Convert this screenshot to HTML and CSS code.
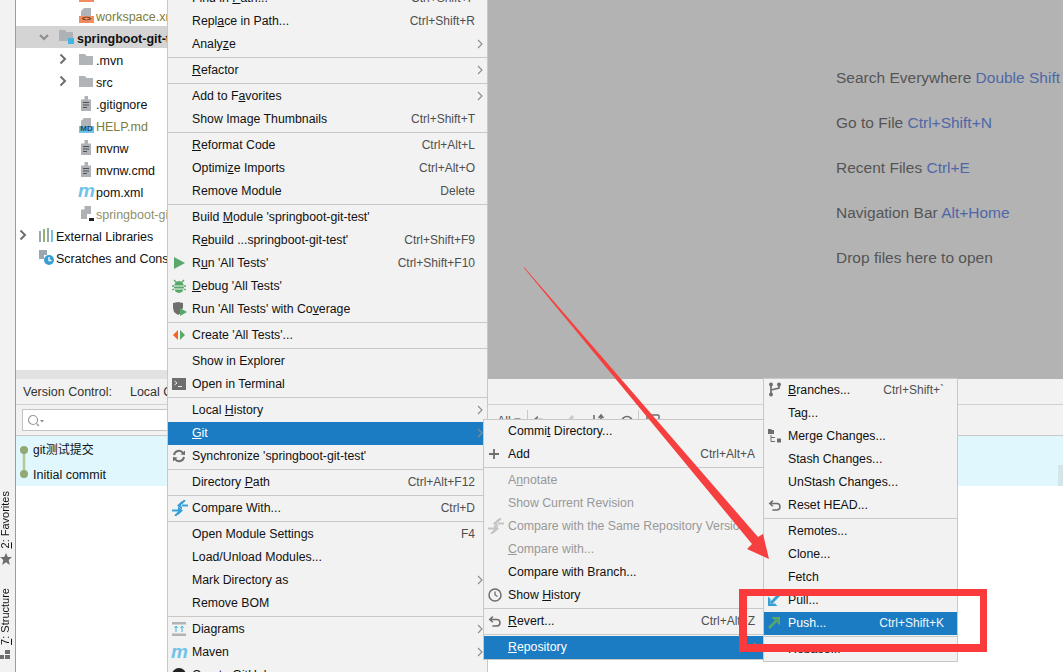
FILE: index.html
```html
<!DOCTYPE html>
<html lang="en">
<head>
<meta charset="utf-8">
<title>IDE Git menu</title>
<link rel="stylesheet" href="styles.css">
</head>
<body>
<svg class="defs" width="0" height="0">
  <symbol id="chev" viewBox="0 0 6 10"><path d="M1 1l4 4-4 4" fill="none" stroke="#8c8c8c" stroke-width="1.1"/></symbol>
  <symbol id="tchev" viewBox="0 0 8 12"><path d="M1.500 1.500L6 6l-4.500 4.500" fill="none" stroke="#6e6e6e" stroke-width="2"/></symbol>
  <symbol id="folder" viewBox="0 0 14 11"><path d="M0 0h6l1.500 2H14v9H0z" fill="#b0b4b8"/></symbol>
  <symbol id="file" viewBox="0 0 10 15"><path d="M3.500 0H7v3.500H10V15H0V3.500h3.500z" fill="#aeb2b6"/><path d="M2 6.500h6M2 9h6M2 11.500h4" stroke="#4e5154" stroke-width="1"/></symbol>
  <symbol id="compare" viewBox="0 0 16 16"><path d="M10 1L5 5.500 10 10z M9 4.500h7v2H9z M6 6l5 4.500L6 15z M0 9.500h7v2H0z" fill="#389fd6"/><path d="M9.500 3.500L13 0M6.500 12.500L3 16" stroke="#389fd6" stroke-width="2"/></symbol>
  <symbol id="undo" viewBox="0 0 16 16"><path d="M5.500 3L2 6.200l3.500 3.200M2.500 6.200h7.500a3.700 3.700 0 0 1 0 7.400H5" fill="none" stroke="#6e6e6e" stroke-width="1.700"/></symbol>
</svg>

<div class="app">
  <aside class="stripe">
    <div class="stripe-tool"><span class="vtext"><u>2</u>: Favorites</span>
      <svg class="stripe-icon" width="12" height="12" viewBox="0 0 12 12"><path d="M6 0l1.800 4H12L8.700 7l1.100 5L6 9.300 2.200 12l1.100-5L0 4h4.200z" fill="#6e6e6e"/></svg>
    </div>
    <div class="stripe-tool"><span class="vtext"><u>7</u>: Structure</span>
      <svg class="stripe-icon" width="10" height="10" viewBox="0 0 10 10"><path d="M5 0h5v4H5zM0 5h4v4H0zM5 5h5v4H5z" fill="#6e6e6e"/></svg>
    </div>
  </aside>

  <main class="main">
    <div class="top">
      <section class="tree">
        <div class="tree-rows">
          <div class="node d2 peek"><i class="peek-bar"></i></div>
          <div class="node d2"><span class="tw"></span><span class="ficon"><svg width="15" height="15" viewBox="0 0 15 15"><path d="M5 0h7v8H2V3z" fill="#b0b4b8"/><rect y="8" width="15" height="7" fill="#f28c5e"/></svg><b class="bar-label">&lt;&gt;</b></span><span class="olive">workspace.xml</span></div>
          <div class="node d1 selected"><span class="tw"><svg width="10" height="7" viewBox="0 0 10 7"><path d="M1 1l4 4 4-4" fill="none" stroke="#8c8c8c" stroke-width="2"/></svg></span><span class="ficon"><svg width="15" height="14" viewBox="0 0 15 14"><path d="M0 0h6l1.500 2H14v9H0z" fill="#aeb2b6"/><rect x="9" y="8" width="6" height="6" fill="#40b6e0"/></svg></span><strong>springboot-git-test</strong></div>
          <div class="node d2"><span class="tw"><svg width="8" height="12"><use href="#tchev"/></svg></span><span class="ficon"><svg width="14" height="11"><use href="#folder"/></svg></span><span>.mvn</span></div>
          <div class="node d2"><span class="tw"><svg width="8" height="12"><use href="#tchev"/></svg></span><span class="ficon"><svg width="14" height="11"><use href="#folder"/></svg></span><span>src</span></div>
          <div class="node d2"><span class="tw"></span><span class="ficon indent"><svg width="10" height="15"><use href="#file"/></svg></span><span>.gitignore</span></div>
          <div class="node d2"><span class="tw"></span><span class="ficon"><svg width="15" height="15" viewBox="0 0 15 15"><path d="M5 0h7v8H2V3z" fill="#b0b4b8"/><rect y="8" width="15" height="7" fill="#6fc3e8"/></svg><b class="bar-label dark">MD</b></span><span class="olive">HELP.md</span></div>
          <div class="node d2"><span class="tw"></span><span class="ficon indent"><svg width="10" height="15"><use href="#file"/></svg></span><span>mvnw</span></div>
          <div class="node d2"><span class="tw"></span><span class="ficon indent"><svg width="10" height="15"><use href="#file"/></svg></span><span>mvnw.cmd</span></div>
          <div class="node d2"><span class="tw"></span><span class="ficon"><i class="maven">m</i></span><span>pom.xml</span></div>
          <div class="node d2"><span class="tw"></span><span class="ficon indent"><svg width="14" height="15" viewBox="0 0 14 15"><path d="M3.500 0H10v13H0V3.500h3.500z" fill="#aeb2b6"/><rect x="6" y="8" width="7" height="7" fill="#fff"/><rect x="8" y="12" width="5" height="3" fill="#222"/></svg></span><span class="muted">springboot-git-test.iml</span></div>
          <div class="node d0"><span class="tw"><svg width="8" height="12"><use href="#tchev"/></svg></span><span class="ficon"><svg width="15" height="14" viewBox="0 0 15 14"><path d="M0 3h2v11H0z" fill="#9aa7b0"/><path d="M4 1h2v13H4z" fill="#8fb569"/><path d="M8 0h2v14H8z" fill="#9aa7b0"/><path d="M12 2h2v12h-2z" fill="#6fc3e8"/></svg></span><span>External Libraries</span></div>
          <div class="node d0"><span class="tw"></span><span class="ficon"><svg width="15" height="15" viewBox="0 0 15 15"><path d="M0 0h8v5H5v4H0z" fill="#9aa7b0"/><circle cx="10" cy="10" r="5" fill="#389fd6"/><path d="M10 7v3.500h2.500" fill="none" stroke="#fff" stroke-width="1.300"/></svg></span><span>Scratches and Consoles</span></div>
        </div>
        <div class="tree-foot"></div>
      </section>
      <section class="editor">
        <p class="hint">Search Everywhere <span class="key">Double Shift</span></p>
        <p class="hint">Go to File <span class="key">Ctrl+Shift+N</span></p>
        <p class="hint">Recent Files <span class="key">Ctrl+E</span></p>
        <p class="hint">Navigation Bar <span class="key">Alt+Home</span></p>
        <p class="hint">Drop files here to open</p>
      </section>
    </div>

    <section class="vcs">
      <div class="vcs-tabs"><span>Version Control:</span><span>Local Changes</span></div>
      <div class="vcs-tools">
        <div class="search"><svg width="18" height="13" viewBox="0 0 18 13"><circle cx="6" cy="6" r="4.500" fill="none" stroke="#9a9a9a" stroke-width="1.200"/><path d="M9.500 9.500l2.500 2.500" stroke="#9a9a9a" stroke-width="1.300"/><path d="M13 6h4l-2 2.500z" fill="#8c8c8c"/></svg></div>
        <div class="tool-icons">
          <span class="all">All ▾</span>
          <i class="tool-sep"></i>
          <svg class="tool" width="14" height="14"><use href="#undo"/></svg>
          <svg class="tool" width="14" height="14" viewBox="0 0 14 14"><path d="M2 13L11 2" stroke="#c9c9c9" stroke-width="3"/></svg>
          <svg class="tool" width="14" height="14" viewBox="0 0 14 14"><path d="M3 1v12M10 1v12M7.500 4L10 1l2.500 3" fill="none" stroke="#6e6e6e" stroke-width="1.600"/></svg>
          <svg class="tool" width="14" height="14" viewBox="0 0 14 14"><circle cx="7" cy="8" r="5.500" fill="none" stroke="#6e6e6e" stroke-width="1.500"/><circle cx="7" cy="8" r="2" fill="#6e6e6e"/></svg>
          <i class="tool-sep"></i>
          <svg class="tool" width="14" height="14" viewBox="0 0 14 14"><rect x="1" y="1" width="12" height="12" rx="1" fill="none" stroke="#6e6e6e" stroke-width="1.500"/></svg>
        </div>
      </div>
      <div class="log">
        <div class="graph"><svg width="10" height="36" viewBox="0 0 10 36"><path d="M5 5v24" stroke="#b4c99a" stroke-width="2.500"/><circle cx="5" cy="5" r="4" fill="#93a873"/><circle cx="5" cy="29" r="4" fill="#93a873"/></svg></div>
        <div class="log-row first">git测试提交</div>
        <div class="log-row">Initial commit</div>
        <i class="log-thumb"></i>
      </div>
    </section>
  </main>
</div>

<nav class="menu menu-main">
  <div class="row"><span class="ic"></span><span class="lb">Find in <u>P</u>ath...</span><span class="sc">Ctrl+Shift+F</span></div>
  <div class="row"><span class="ic"></span><span class="lb">Repl<u>a</u>ce in Path...</span><span class="sc">Ctrl+Shift+R</span></div>
  <div class="row"><span class="ic"></span><span class="lb">Analy<u>z</u>e</span><svg class="ch" width="6" height="10"><use href="#chev"/></svg></div>
  <hr class="sep">
  <div class="row"><span class="ic"></span><span class="lb"><u>R</u>efactor</span><svg class="ch" width="6" height="10"><use href="#chev"/></svg></div>
  <hr class="sep">
  <div class="row"><span class="ic"></span><span class="lb">Add to F<u>a</u>vorites</span><svg class="ch" width="6" height="10"><use href="#chev"/></svg></div>
  <div class="row"><span class="ic"></span><span class="lb">Show Image Thumbnails</span><span class="sc">Ctrl+Shift+T</span></div>
  <hr class="sep">
  <div class="row"><span class="ic"></span><span class="lb"><u>R</u>eformat Code</span><span class="sc">Ctrl+Alt+L</span></div>
  <div class="row"><span class="ic"></span><span class="lb">Optimi<u>z</u>e Imports</span><span class="sc">Ctrl+Alt+O</span></div>
  <div class="row"><span class="ic"></span><span class="lb">Remove Module</span><span class="sc">Delete</span></div>
  <hr class="sep">
  <div class="row"><span class="ic"></span><span class="lb">Build <u>M</u>odule 'springboot-git-test'</span></div>
  <div class="row"><span class="ic"></span><span class="lb">R<u>e</u>build ...springboot-git-test'</span><span class="sc">Ctrl+Shift+F9</span></div>
  <div class="row"><span class="ic"><svg width="14" height="14" viewBox="0 0 14 14"><path d="M2 1l11 6-11 6z" fill="#59a869"/></svg></span><span class="lb">R<u>u</u>n 'All Tests'</span><span class="sc">Ctrl+Shift+F10</span></div>
  <div class="row"><span class="ic"><svg width="14" height="14" viewBox="0 0 14 14"><path d="M2 1l3 3M12 1L9 4M0 7h2M12 7h2M0 11l2-1M14 11l-2-1" stroke="#59a869" stroke-width="1.300"/><ellipse cx="7" cy="8" rx="5" ry="6" fill="#59a869"/><path d="M2 7h10M2 10h10" stroke="#f2f2f2" stroke-width="1"/></svg></span><span class="lb"><u>D</u>ebug 'All Tests'</span></div>
  <div class="row"><span class="ic"><svg width="15" height="15" viewBox="0 0 15 15"><path d="M1 2l5-1 5 1v5L9 9v3l-3 2-4-3-1-4z" fill="#6e6e6e"/><path d="M8 7l7 4-7 4z" fill="#59a869"/></svg></span><span class="lb">Run 'All Tests' with Co<u>v</u>erage</span></div>
  <hr class="sep">
  <div class="row"><span class="ic"><svg width="14" height="12" viewBox="0 0 14 12"><path d="M6 1L1 6l5 5z" fill="#f26522"/><path d="M8 1l5 5-5 5z" fill="#59a869"/></svg></span><span class="lb">Create 'All Tests'...</span></div>
  <hr class="sep">
  <div class="row"><span class="ic"></span><span class="lb">Show in Explorer</span></div>
  <div class="row"><span class="ic"><svg width="14" height="12" viewBox="0 0 14 12"><rect width="14" height="12" fill="#6e6e6e"/><path d="M2.500 3l2.500 2-2.500 2" fill="none" stroke="#eee" stroke-width="1"/><path d="M6 8.500h4" stroke="#eee" stroke-width="1"/></svg></span><span class="lb">Open in Terminal</span></div>
  <hr class="sep">
  <div class="row"><span class="ic"></span><span class="lb">Local <u>H</u>istory</span><svg class="ch" width="6" height="10"><use href="#chev"/></svg></div>
  <div class="row active"><span class="ic"></span><span class="lb"><u>G</u>it</span><svg class="ch" width="6" height="10"><use href="#chev"/></svg></div>
  <div class="row"><span class="ic"><svg width="14" height="14" viewBox="0 0 14 14"><path d="M2 6a5 5 0 0 1 9-2M12 8a5 5 0 0 1-9 2" fill="none" stroke="#6e6e6e" stroke-width="2"/><path d="M8.500 5.500L13 6V1.500zM5.500 8.500L1 8v4.500z" fill="#6e6e6e"/></svg></span><span class="lb">Synchronize 'springboot-git-test'</span></div>
  <hr class="sep">
  <div class="row"><span class="ic"></span><span class="lb">Directory <u>P</u>ath</span><span class="sc">Ctrl+Alt+F12</span></div>
  <hr class="sep">
  <div class="row"><span class="ic"><svg width="16" height="16"><use href="#compare"/></svg></span><span class="lb">Compare With...</span><span class="sc">Ctrl+D</span></div>
  <hr class="sep">
  <div class="row"><span class="ic"></span><span class="lb">Open Module Settings</span><span class="sc">F4</span></div>
  <div class="row"><span class="ic"></span><span class="lb">Load/Unload Modules...</span></div>
  <div class="row"><span class="ic"></span><span class="lb">Mark Directory as</span><svg class="ch" width="6" height="10"><use href="#chev"/></svg></div>
  <div class="row"><span class="ic"></span><span class="lb">Remove BOM</span></div>
  <hr class="sep">
  <div class="row"><span class="ic"><svg width="14" height="14" viewBox="0 0 14 14"><path d="M0 0h14v2.500H0zM0 11.500h14V14H0z" fill="#afb4b8"/><path d="M4 4v6M10 4v6M2.500 6L4 4l1.500 2M8.500 6L10 4l1.500 2" fill="none" stroke="#40b6e0" stroke-width="1"/></svg></span><span class="lb">Diagrams</span><svg class="ch" width="6" height="10"><use href="#chev"/></svg></div>
  <div class="row"><span class="ic"><i class="maven">m</i></span><span class="lb">Maven</span><svg class="ch" width="6" height="10"><use href="#chev"/></svg></div>
  <div class="row"><span class="ic"><svg width="14" height="14" viewBox="0 0 14 14"><circle cx="7" cy="7" r="7" fill="#222"/></svg></span><span class="lb">Create GitHub</span></div>
</nav>

<nav class="menu menu-git">
  <div class="row"><span class="ic"></span><span class="lb">Commi<u>t</u> Directory...</span></div>
  <div class="row"><span class="ic"><svg width="12" height="12" viewBox="0 0 12 12"><path d="M6 1v10M1 6h10" stroke="#6e6e6e" stroke-width="1.800"/></svg></span><span class="lb">Add</span><span class="sc">Ctrl+Alt+A</span></div>
  <hr class="sep">
  <div class="row off"><span class="ic"></span><span class="lb">A<u>n</u>notate</span></div>
  <div class="row off"><span class="ic"></span><span class="lb">Show Current Revision</span></div>
  <div class="row off"><span class="ic"><svg class="faded" width="16" height="16"><use href="#compare"/></svg></span><span class="lb">Compare with the Same Repository Version</span></div>
  <div class="row off"><span class="ic"></span><span class="lb"><u>C</u>ompare with...</span></div>
  <div class="row"><span class="ic"></span><span class="lb">Compare with Branch...</span></div>
  <div class="row"><span class="ic"><svg width="14" height="14" viewBox="0 0 14 14"><circle cx="7" cy="7" r="6" fill="none" stroke="#6e6e6e" stroke-width="1.500"/><path d="M7 3.500V7l2.500 1.500" fill="none" stroke="#6e6e6e" stroke-width="1.300"/></svg></span><span class="lb">Show <u>H</u>istory</span></div>
  <hr class="sep">
  <div class="row"><span class="ic"><svg width="14" height="14"><use href="#undo"/></svg></span><span class="lb"><u>R</u>evert...</span><span class="sc">Ctrl+Alt+Z</span></div>
  <hr class="sep">
  <div class="row active"><span class="ic"></span><span class="lb"><u>R</u>epository</span><svg class="ch" width="6" height="10"><use href="#chev"/></svg></div>
</nav>

<nav class="menu menu-repo">
  <div class="row"><span class="ic"><svg width="14" height="15" viewBox="0 0 14 15"><circle cx="3" cy="2.500" r="2" fill="#6e6e6e"/><circle cx="3" cy="12.500" r="2" fill="#6e6e6e"/><circle cx="11" cy="2.500" r="2" fill="#6e6e6e"/><path d="M3 3v9M11 3v3L3 8" fill="none" stroke="#6e6e6e" stroke-width="1.700"/></svg></span><span class="lb"><u>B</u>ranches...</span><span class="sc">Ctrl+Shift+`</span></div>
  <div class="row"><span class="ic"></span><span class="lb">Tag...</span></div>
  <div class="row"><span class="ic"><svg width="14" height="14" viewBox="0 0 14 14"><path d="M0 0h3l1 1h2v4H0z" fill="#6e6e6e"/><path d="M3 6v6.500h4M3 8.500h4" fill="none" stroke="#6e6e6e" stroke-width="1"/><rect x="9" y="9.500" width="4" height="4" fill="#6e6e6e"/></svg></span><span class="lb">Merge Changes...</span></div>
  <div class="row"><span class="ic"></span><span class="lb">Stash Changes...</span></div>
  <div class="row"><span class="ic"></span><span class="lb">UnStash Changes...</span></div>
  <div class="row"><span class="ic"><svg width="14" height="14"><use href="#undo"/></svg></span><span class="lb">Reset HEAD...</span></div>
  <hr class="sep">
  <div class="row"><span class="ic"></span><span class="lb">Remotes...</span></div>
  <div class="row"><span class="ic"></span><span class="lb">Clone...</span></div>
  <div class="row"><span class="ic"></span><span class="lb">Fetch</span></div>
  <div class="row"><span class="ic"><svg width="12" height="12" viewBox="0 0 12 12"><path d="M11 1L3 9" stroke="#389fd6" stroke-width="3"/><path d="M0 2.500V12h9.500L7 9.500H2.500V5z" fill="#389fd6"/></svg></span><span class="lb">Pull...</span></div>
  <div class="row active"><span class="ic"><svg width="12" height="12" viewBox="0 0 12 12"><path d="M1 11l8-8" stroke="#59a869" stroke-width="2.500"/><path d="M3.500 0H12v8.500L9.500 6V2.500H5.500z" fill="#59a869"/></svg></span><span class="lb">Push...</span><span class="sc">Ctrl+Shift+K</span></div>
  <hr class="sep">
  <div class="row"><span class="ic"></span><span class="lb">Rebase...</span></div>
</nav>

<svg class="annot-arrow" width="1063" height="672" viewBox="0 0 1063 672"><polygon points="524,267 758,537 763,534 769,559 747,549 752,544 524,268" fill="#f63f3f"/></svg>
<div class="annot-box"></div>
</body>
</html>
```

FILE: styles.css
```css
* { box-sizing: border-box; }
html, body { margin: 0; height: 100%; overflow: hidden; }
body {
  position: relative;
  width: 1063px;
  height: 672px;
  background: #fff;
  color: #111;
  font: 12.5px "Liberation Sans", Arial, "Noto Sans CJK SC", sans-serif;
}
.defs { position: absolute; }
.app { display: flex; height: 672px; }

/* left tool stripe */
.stripe {
  flex: 0 0 16px;
  display: flex;
  flex-direction: column;
  justify-content: flex-end;
  gap: 23px;
  padding-bottom: 12px;
  background: #f2f2f2;
  border-right: 1px solid #9c9c9c;
  overflow: hidden;
}
.stripe-tool { display: flex; flex-direction: column; align-items: flex-start; gap: 5px; }
.vtext {
  writing-mode: vertical-rl;
  transform: rotate(180deg);
  font-size: 11px;
  line-height: 10px;
  width: 10px;
}
.stripe-icon { display: block; }

.main { flex: 1; display: flex; flex-direction: column; min-width: 0; }
.top { flex: 0 0 379px; display: flex; }

/* project tree */
.tree { flex: 0 0 472px; display: flex; flex-direction: column; overflow: hidden; }
.tree-rows { flex: 1; margin-top: -18px; overflow: hidden; }
.tree-foot { flex: 0 0 9px; background: #e2e2e2; }
.node {
  display: flex;
  align-items: center;
  height: 22px;
  padding-top: 3px;
  white-space: nowrap;
}
.node.selected { background: #d4d4d4; }
.d0 { padding-left: 3px; }
.d1 { padding-left: 23px; }
.d2 { padding-left: 43px; }
.peek { align-items: flex-end; padding: 0 0 2px 63px; }
.peek-bar { width: 15px; height: 2px; background: #f28c5e; }
.tw { flex: 0 0 20px; display: flex; align-items: center; margin-top: -3px; }
.ficon {
  flex: 0 0 17px;
  height: 16px;
  margin-top: -3px;
  display: flex;
  align-items: center;
  position: relative;
}
.ficon.indent { padding-left: 2px; }
.d1 .ficon { flex-basis: 18px; }
.bar-label {
  position: absolute;
  left: 0;
  width: 15px;
  bottom: 1px;
  text-align: center;
  font: bold 8px/7px "Liberation Sans", sans-serif;
  color: #5a3a28;
}
.bar-label.dark { color: #23465a; }
.olive { color: #7d7d3c; }
.muted { color: #8f8f6c; }
.maven {
  font: italic bold 19px/14px "Liberation Sans", sans-serif;
  color: #6fc3e8;
  margin-left: -1px;
}

/* empty editor */
.editor {
  flex: 1;
  min-width: 0;
  background: #b3b3b3;
  padding: 69px 0 0 348px;
  display: flex;
  flex-direction: column;
  gap: 27px;
  white-space: nowrap;
  overflow: hidden;
}
.hint { margin: 0; font-size: 15.5px; line-height: 18px; color: #555; }
.key { color: #4f67a6; }

/* version control */
.vcs { flex: 1; display: flex; flex-direction: column; min-height: 0; }
.vcs-tabs {
  flex: 0 0 26px;
  display: flex;
  align-items: center;
  gap: 18px;
  padding-left: 7px;
  background: #f2f2f2;
  border-bottom: 1px solid #d0d0d0;
  color: #333;
}
.vcs-tools {
  flex: 0 0 31px;
  display: flex;
  align-items: flex-start;
  background: #f2f2f2;
  border-bottom: 1px solid #c9c9c9;
}
.search {
  flex: 0 0 300px;
  height: 22px;
  margin: 4px 0 0 6px;
  padding: 4px 0 0 4px;
  background: #fff;
  border: 1px solid #c4c4c4;
}
.tool-icons {
  display: flex;
  align-items: flex-start;
  margin-left: 175px;
}
.all { width: 25px; margin: 8px 5px 0 0; color: #555; white-space: nowrap; }
.tool-sep { flex: none; width: 1px; height: 20px; margin-top: 5px; background: #c9c9c9; }
.tool { flex: none; margin: 9px 0 0 5px; }
.tool + .tool { margin-left: 15px; }
.tool + .tool-sep { margin-left: 4px; }
.tool-sep + .tool { margin-left: 5px; }
.tool-sep ~ .tool-sep + .tool { margin-left: 7px; }
.log {
  position: relative;
  background: #e0f7fe;
  height: 50px;
}
.graph { position: absolute; left: 3px; top: 9px; }
.log-row { height: 25px; line-height: 28px; padding-left: 17px; }
.log-row.first { font-size: 12px; }
.log-thumb { position: absolute; right: 0; top: 29px; width: 5px; height: 21px; background: #d3e6ea; }

/* popup menus */
.menu {
  position: absolute;
  background: #f2f2f2;
  border: 1px solid #c8c8c8;
  font-size: 12.3px;
}
.menu-main { left: 167px; top: -14px; width: 321px; height: 700px; z-index: 1; --pad: 12px; }
.menu-git { left: 483px; top: 419px; width: 281px; z-index: 2; --pad: 8px; }
.menu-repo { left: 763px; top: 378px; width: 195px; z-index: 3; --pad: 13px; }
.row {
  display: flex;
  align-items: center;
  height: 23px;
  padding: 0 var(--pad) 2px 4px;
  white-space: nowrap;
  position: relative;
}
.ic {
  flex: 0 0 20px;
  display: flex;
  align-items: center;
  height: 16px;
}
.lb { flex: none; }
.sc { margin-left: auto; font-size: 12px; color: #4f4f4f; }
.ch { position: absolute; right: 4px; top: 6px; }
.sep { height: 3px; margin: 0; border: 0; background: linear-gradient(#c9c9c9, #c9c9c9) 0 1px / 100% 1px no-repeat; }
.active { background: #1b7cc3; color: #fff; }
.active .sc { color: #f0f6fb; }
.off { color: #989898; }
.faded { opacity: .45; filter: grayscale(1); }

/* screenshot annotations */
.annot-arrow { position: absolute; left: 0; top: 0; z-index: 5; pointer-events: none; }
.annot-box {
  position: absolute;
  left: 739px;
  top: 589px;
  width: 248px;
  height: 63px;
  border: 7px solid #fb3a3c;
  border-left-width: 8px;
  border-bottom-width: 8px;
  z-index: 6;
}
```
